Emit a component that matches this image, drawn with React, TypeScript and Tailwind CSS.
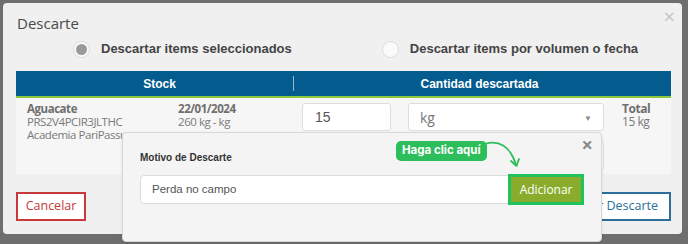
import React from "react";

function Radio({ checked }: { checked?: boolean }) {
  return (
    <span className="flex h-[17px] w-[17px] shrink-0 items-center justify-center rounded-full border border-[#dcdcdc] bg-[#fafafa]">
      {checked && <span className="h-[11px] w-[11px] rounded-full bg-[#9a9a9a]" />}
    </span>
  );
}

export default function App() {
  return (
    <div className="relative h-[244px] w-[688px] overflow-hidden bg-[#6e6e6e] font-['Open_Sans',sans-serif]">
      <div className="relative ml-[3px] mt-[3px] flex h-[231px] w-[679px] flex-col rounded-[4px] bg-[#f0f0f0] pl-[13px] pr-[11px]">
        <button className="absolute right-[7px] top-[4px] text-[20px] leading-none text-[#c4c4c4]">×</button>
        <h2 className="mt-[8px] pl-[1px] text-[15px] leading-[24px] text-[#4a4a4a]">Descarte</h2>

        <div className="mt-[2px] flex h-[24px] items-center whitespace-nowrap font-['Liberation_Sans',sans-serif] text-[13px] font-bold text-[#444]">
          <div className="ml-[57px] flex items-center gap-[11px]">
            <Radio checked />
            <span>Descartar items seleccionados</span>
          </div>
          <div className="ml-[90px] flex items-center gap-[11px]">
            <Radio />
            <span>Descartar items por volumen o fecha</span>
          </div>
        </div>

        <div className="mt-[10px] flex h-[27px] items-center border-b-2 border-[#8dc63f] bg-[#035b8e] font-['Liberation_Sans',sans-serif] text-[12px] font-bold text-white">
          <div className="flex w-[277px] justify-center pl-[10px]">Stock</div>
          <div className="h-[15px] w-px bg-[#9cb8cc]" />
          <div className="flex flex-1 justify-center pr-[6px]">Cantidad descartada</div>
        </div>

        <div className="relative flex h-[76px] bg-[#f6f6f6] text-[11.5px] leading-[13px] tracking-[-0.45px] text-[#7a7a7a]">
          <div className="ml-[11px] mt-[4px] w-[151px] whitespace-nowrap">
            <div className="font-bold text-[#6f6f6f]">Aguacate</div>
            <div>PRS2V4PCIR3JLTHC</div>
            <div>Academia PariPassu</div>
          </div>
          <div className="mt-[4px] w-[124px] whitespace-nowrap">
            <div className="font-bold text-[#6f6f6f]">22/01/2024</div>
            <div>260 kg - kg</div>
          </div>
          <div className="mt-[5px] flex h-[28px] w-[89px] items-center rounded-[3px] border border-[#dedede] bg-white px-[12px] font-['Liberation_Sans',sans-serif] text-[14px] tracking-normal text-[#555]">
            15
          </div>
          <div className="ml-[17px] mt-[5px] flex flex-col gap-[10px]">
            <div className="flex h-[28px] w-[196px] items-center justify-between rounded-[3px] border border-[#dedede] bg-white px-[11px] text-[14px] tracking-normal text-[#777]">
              <span>kg</span>
              <span className="text-[8px] text-[#888]">▼</span>
            </div>
            <div className="h-[30px] w-[196px] rounded-[3px] border border-[#dedede] bg-white" />
          </div>
          <div className="ml-[18px] mt-[4px] text-[12px]">
            <div className="font-bold text-[#6f6f6f]">Total</div>
            <div>15 kg</div>
          </div>
        </div>

        <div className="mt-[18px] flex justify-between">
          <button className="flex h-[29px] w-[70px] items-center justify-center border-2 border-[#c9383a] bg-white text-[12.5px] text-[#c9383a]">
            Cancelar
          </button>
          <button className="flex h-[29px] w-[140px] items-center justify-center border-2 border-[#2b6f9a] bg-white text-[12.5px] text-[#2b6f9a]">
            Confirmar Descarte
          </button>
        </div>
      </div>

      <div className="absolute left-[122px] top-[132px] h-[110px] w-[480px] rounded-[4px] border border-[#d8d8d8] bg-[#f4f4f4] px-[17px] pt-[17px] shadow-sm">
        <button className="absolute right-[8px] top-[2px] text-[20px] font-bold leading-none text-[#8a8a8a]">×</button>
        <div className="font-['Liberation_Sans',sans-serif] text-[10px] font-bold text-[#333]">Motivo de Descarte</div>
        <div className="mt-[9px] flex h-[31px] items-center">
          <div className="flex h-[29px] w-[372px] items-center rounded-l-[4px] border border-[#dcdcdc] bg-white px-[11px] font-['Liberation_Sans',sans-serif] text-[11.5px] text-[#555]">
            Perda no campo
          </div>
          <button className="-ml-[3px] flex h-[31px] w-[76px] items-center justify-center border-[3px] border-[#1fc25d] bg-[#8aac2d] text-[12px] text-white">
            Adicionar
          </button>
        </div>
        <div className="absolute left-[273px] top-[8px] flex h-[20px] items-center rounded-[5px] bg-[#2dbe5c] px-[6px] font-['Inter',sans-serif] text-[11.5px] font-bold text-white">
          Haga clic aquí
        </div>
        <svg className="absolute left-[361px] top-[8px]" width="42" height="30" viewBox="0 0 42 30" fill="none">
          <path d="M1 3 C14 -1 26 4 32 24" stroke="#2dbe5c" strokeWidth="1.8" strokeLinecap="round" />
          <path d="M27 20 L32.5 25 L35 18" stroke="#2dbe5c" strokeWidth="1.8" strokeLinecap="round" strokeLinejoin="round" />
        </svg>
      </div>
    </div>
  );
}
